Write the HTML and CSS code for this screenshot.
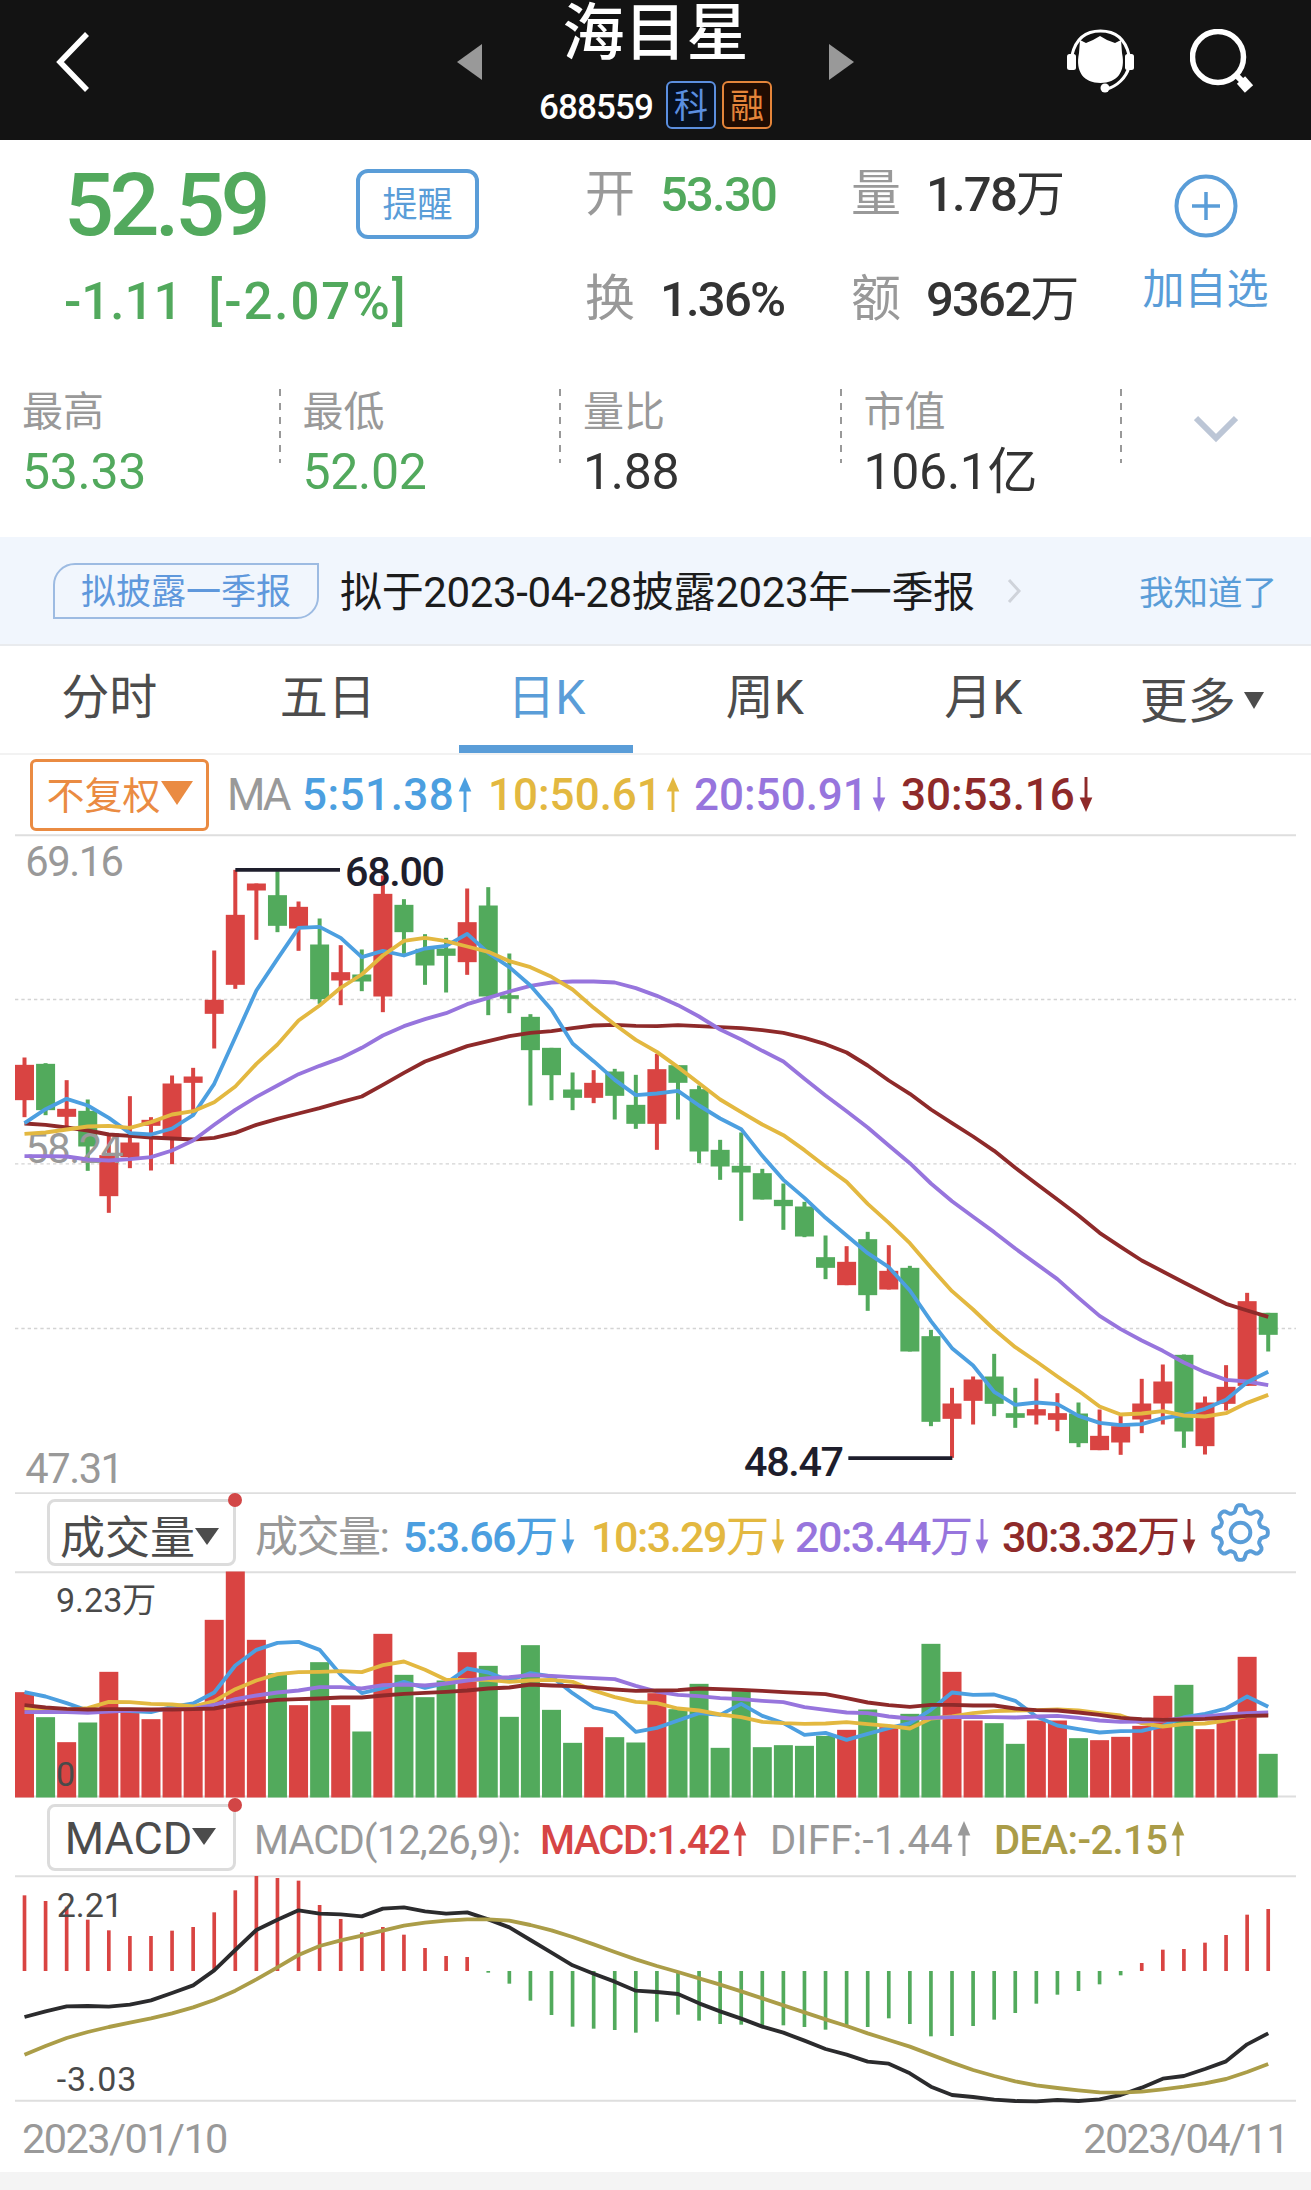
FILE: index.html
```html
<!DOCTYPE html>
<html lang="zh-CN">
<head>
  <meta charset="UTF-8">
  <title>海目星 688559</title>
  <meta name="viewport" content="width=device-width, initial-scale=1.0">
  <link rel="stylesheet" href="styles.css">
</head>
<body>
  <svg class="defs" width="0" height="0">
    <symbol id="up" viewBox="0 0 14 36"><path d="M7 10V36" stroke="currentColor" stroke-width="3"/><path d="M0.500 15L7 0l6.500 15z" fill="currentColor"/></symbol>
    <symbol id="down" viewBox="0 0 14 36"><path d="M7 0V26" stroke="currentColor" stroke-width="3"/><path d="M0.500 21L7 36l6.500-15z" fill="currentColor"/></symbol>
  </svg>

  <header class="header">
    <svg class="back" width="34" height="60" viewBox="0 0 34 60"><path d="M31 2L4 30l27 28" fill="none" stroke="#fff" stroke-width="5.500"/></svg>
    <div class="stock">
      <svg width="25" height="36" viewBox="0 0 25 36"><path d="M25 0v36L0 18z" fill="#999"/></svg>
      <div class="stock-title">
        <h1>海目星</h1>
        <div class="stock-code">
          <span class="code">688559</span>
          <span class="badge badge-blue">科</span>
          <span class="badge badge-orange">融</span>
        </div>
      </div>
      <svg width="25" height="36" viewBox="0 0 25 36"><path d="M0 0v36l25-18z" fill="#999"/></svg>
    </div>
    <div class="header-icons">
      <svg width="68" height="66" viewBox="0 0 68 66">
        <path d="M13 11L19 14 26 11 33 7 40 11 48 14 54 11 55 24C59 43 50 54 33.500 54S8 43 12 24z" fill="#fff"/>
        <path d="M5 26C9 9 20 2 33.500 2S58 9 62 26M62 38C59 49 50 57 40 60" fill="none" stroke="#fff" stroke-width="3"/>
        <rect x="0" y="25" width="9" height="16" rx="2.500" fill="#fff"/>
        <rect x="58" y="25" width="9" height="16" rx="2.500" fill="#fff"/>
        <circle cx="38" cy="59" r="4.500" fill="#fff"/>
      </svg>
      <svg width="66" height="66" viewBox="0 0 66 66">
        <circle cx="28" cy="28" r="25.500" fill="none" stroke="#fff" stroke-width="5.500"/>
        <path d="M45 45l7 7" stroke="#fff" stroke-width="6"/>
        <path d="M51 51l8 9" stroke="#fff" stroke-width="11"/>
      </svg>
    </div>
  </header>

  <section class="quote">
    <div class="quote-main">
      <div class="price">
        <div class="price-row">
          <span class="price-now">52.59</span>
          <button class="remind">提醒</button>
        </div>
        <div class="price-change"><span>-1.11</span><span class="pct">[-2.07%]</span></div>
      </div>
      <dl class="facts">
        <dt>开</dt><dd class="green">53.30</dd>
        <dt>量</dt><dd>1.78<i>万</i></dd>
        <dt>换</dt><dd>1.36%</dd>
        <dt>额</dt><dd>9362<i>万</i></dd>
      </dl>
      <div class="add">
        <svg width="64" height="64" viewBox="0 0 64 64" fill="none" stroke="#5a9dd8"><circle cx="32" cy="32" r="29.500" stroke-width="4"/><path d="M32 18v28M18 32h28" stroke-width="3.500"/></svg>
        <span>加自选</span>
      </div>
    </div>
    <div class="stats">
      <div class="stat"><span>最高</span><b class="green">53.33</b></div>
      <div class="stat"><span>最低</span><b class="green">52.02</b></div>
      <div class="stat"><span>量比</span><b>1.88</b></div>
      <div class="stat"><span>市值</span><b>106.1亿</b></div>
      <svg class="more-arrow" width="44" height="28" viewBox="0 0 44 28"><path d="M2 3l20 20L42 3" fill="none" stroke="#bcc6d6" stroke-width="6"/></svg>
    </div>
  </section>

  <section class="notice">
    <span class="notice-tag">拟披露一季报</span>
    <span class="notice-text">拟于2023-04-28披露2023年一季报</span>
    <svg class="notice-arrow" width="16" height="26" viewBox="0 0 16 26"><path d="M3 2l10 11L3 24" fill="none" stroke="#cfd3da" stroke-width="3"/></svg>
    <a class="notice-ok">我知道了</a>
  </section>

  <nav class="tabs">
    <span>分时</span>
    <span>五日</span>
    <span class="active">日K</span>
    <span>周K</span>
    <span>月K</span>
    <span class="tab-more">更多<i class="tri"></i></span>
  </nav>

  <section class="ma-bar">
    <button class="fq">不复权<i class="tri"></i></button>
    <span class="grey">MA</span>
    <span class="c5">5:51.38<svg><use href="#up"/></svg></span>
    <span class="c10">10:50.61<svg><use href="#up"/></svg></span>
    <span class="c20">20:50.91<svg><use href="#down"/></svg></span>
    <span class="c30">30:53.16<svg><use href="#down"/></svg></span>
  </section>

  <svg id="kline" class="chart kline" viewBox="0 -18 3933 1977"></svg>

  <section class="ind-bar vol-bar">
    <button class="ind">成交量<i class="tri"></i></button>
    <span class="grey">成交量:</span>
    <span class="c5">5:3.66<i>万</i><svg><use href="#down"/></svg></span>
    <span class="c10">10:3.29<i>万</i><svg><use href="#down"/></svg></span>
    <span class="c20">20:3.44<i>万</i><svg><use href="#down"/></svg></span>
    <span class="c30">30:3.32<i>万</i><svg><use href="#down"/></svg></span>
    <svg class="gear" viewBox="-31 -31 62 62" fill="none" stroke="#5a9dd8" stroke-width="4"><path id="gearPath" stroke-linejoin="round"/><circle r="10"/></svg>
  </section>

  <svg id="volume" class="chart volume" viewBox="0 275 3933 678"></svg>

  <section class="ind-bar macd-bar">
    <button class="ind ind-macd">MACD<i class="tri"></i></button>
    <span class="grey">MACD(12,26,9):</span>
    <span class="red">MACD:1.42<svg><use href="#up"/></svg></span>
    <span class="grey diff">DIFF:-1.44<svg><use href="#up"/></svg></span>
    <span class="olive">DEA:-2.15<svg><use href="#up"/></svg></span>
  </section>

  <svg id="macd" class="chart macd" viewBox="0 258 3933 675"></svg>

  <footer class="dates"><span>2023/01/10</span><span>2023/04/11</span></footer>

  <script src="chart.js"></script>
</body>
</html>
```
FILE: styles.css
```css
* {
  margin: 0;
  padding: 0;
  box-sizing: border-box;
}

body {
  width: 1311px;
  min-height: 2190px;
  background: #f4f4f4;
  color: #333;
  font-family: Roboto, "Noto Sans CJK SC", sans-serif;
}

button {
  background: none;
  font-family: inherit;
}

i {
  font-style: normal;
  font-weight: 400;
}

.defs {
  display: none;
}

.green { color: #52a95d; }
.red { color: #d64545; }
.grey { color: #999; }
.olive { color: #aa9c48; }
.c5 { color: #4c9fe0; }
.c10 { color: #e3b840; }
.c20 { color: #9775dd; }
.c30 { color: #8e2a2a; }

.tri {
  display: inline-block;
  border: solid transparent;
  border-width: 17px 12px 0;
  border-top-color: currentColor;
}

/* header */
.header {
  height: 140px;
  display: grid;
  grid-template-columns: 457px 397px 1fr;
  background: #131313;
}

.back {
  margin: 32px 0 0 56px;
}

.stock {
  display: flex;
  justify-content: space-between;
}

.stock > svg {
  margin-top: 44px;
}

.stock-title {
  display: flex;
  flex-direction: column;
  align-items: center;
}

h1 {
  height: 81px;
  line-height: 68px;
  font-size: 62px;
  font-weight: 500;
  color: #fff;
}

.stock-code {
  display: flex;
  align-items: center;
  gap: 6px;
}

.code {
  margin: 4px 7px 0 0;
  font-size: 35px;
  font-weight: 500;
  letter-spacing: -0.9px;
  color: #fff;
}

.badge {
  width: 50px;
  height: 48px;
  border: 2px solid;
  border-radius: 6px;
  font-size: 34px;
  line-height: 46px;
  text-align: center;
}

.badge-blue {
  color: #5b8fe0;
  background: #06101f;
}

.badge-orange {
  color: #e5853a;
  background: #1f0c02;
}

.header-icons {
  display: flex;
  gap: 55px;
  padding: 29px 0 0 213px;
}

/* quote */
.quote {
  height: 397px;
  background: #fff;
}

.quote-main {
  display: grid;
  grid-template-columns: 585px 515px 211px;
  height: 240px;
}

.price {
  padding: 27px 0 0 64px;
  color: #52a95d;
}

.price-row {
  display: flex;
  align-items: center;
  height: 74px;
}

.price-now {
  width: 292px;
  font-size: 88px;
  font-weight: 500;
  letter-spacing: -4.5px;
}

.remind {
  width: 123px;
  height: 70px;
  padding-bottom: 5px;
  border: 4px solid #5a9dd8;
  border-radius: 12px;
  color: #5a9dd8;
  font-size: 35px;
}

.price-change {
  display: flex;
  gap: 26px;
  margin-top: 31px;
  font-size: 51px;
  font-weight: 500;
  line-height: 60px;
}

.pct {
  letter-spacing: 1.9px;
}

.facts {
  display: grid;
  grid-template-columns: 75px 191px 75px 1fr;
  grid-template-rows: 105px 105px;
  padding-top: 2px;
  font-size: 49px;
  line-height: 105px;
  white-space: nowrap;
}

.facts dt {
  color: #999;
  font-size: 50px;
}

.facts dd {
  font-weight: 500;
  letter-spacing: -1.8px;
}

.add {
  display: flex;
  flex-direction: column;
  align-items: center;
  padding-top: 34px;
  color: #5a9dd8;
  font-size: 42px;
}

.add span {
  margin-top: 22px;
  line-height: 60px;
}

.stats {
  display: flex;
}

.stat {
  width: 280.5px;
  height: 115px;
  padding: 2px 0 0 22px;
  background: repeating-linear-gradient(#999 0 7px, transparent 7px 14px) right 9px / 2px 74px no-repeat;
}

.stat span {
  display: block;
  color: #999;
  font-size: 41px;
  line-height: 60px;
}

.stat b {
  display: block;
  font-size: 50px;
  font-weight: 400;
  line-height: 60px;
  letter-spacing: -0.3px;
}

.more-arrow {
  margin: 35px 0 0 72px;
}

/* notice */
.notice {
  display: flex;
  align-items: center;
  height: 109px;
  padding-left: 53px;
  background: #f1f6fd;
  border-bottom: 2px solid #e9ebee;
}

.notice-tag {
  width: 266px;
  height: 56px;
  border: 2px solid #9dbbe2;
  border-radius: 22px 0;
  color: #5f98dc;
  font-size: 35px;
  line-height: 55px;
  text-align: center;
}

.notice-text {
  margin: -4px 0 0 21px;
  font-size: 42px;
  letter-spacing: -0.35px;
  color: #1c1c1c;
}

.notice-arrow {
  margin-left: 31px;
}

.notice-ok {
  margin: -2px 0 0 auto;
  padding-right: 34px;
  color: #5a9dd8;
  font-size: 34.5px;
}

/* tabs */
.tabs {
  display: grid;
  grid-template-columns: repeat(6, 1fr);
  height: 109px;
  background: #fff;
  border-bottom: 2px solid #f2f2f2;
  color: #4c4c4c;
  font-size: 48px;
  line-height: 103px;
  text-align: center;
}

.tabs .active {
  width: 174px;
  height: 107px;
  margin: 0 auto;
  color: #5a9dd8;
  border-bottom: 8px solid #5a9dd8;
}

.tab-more {
  padding-top: 4px;
}

.tab-more .tri {
  margin: 0 0 9px 8px;
  border-width: 17px 10px 0;
}

/* indicator rows */
.ma-bar {
  display: grid;
  grid-template-columns: 197px 75px 186px 206px 207px 1fr;
  align-items: center;
  height: 79px;
  padding-left: 30px;
  background: #fff;
  font-size: 44px;
  font-weight: 500;
  white-space: nowrap;
}

.ma-bar .grey {
  font-weight: 400;
  letter-spacing: -3px;
}

.ma-bar .c5 {
  letter-spacing: 0.5px;
}

.ma-bar svg,
.ind-bar span svg {
  width: 14px;
  height: 35px;
  margin-left: 4px;
  vertical-align: -2px;
}

.fq {
  width: 179px;
  height: 72px;
  padding-bottom: 5px;
  border: 3px solid #ea8b42;
  border-radius: 6px;
  color: #ea8b42;
  font-size: 38px;
}

.fq .tri {
  margin-bottom: 4px;
  border-width: 24px 16px 0;
}

.ind-bar {
  display: grid;
  align-items: center;
  padding-left: 47px;
  background: #fff;
  font-weight: 500;
  white-space: nowrap;
}

.ind-bar .grey {
  font-weight: 400;
}

.vol-bar {
  grid-template-columns: 208px 148px 188px 204px 207px 208px 1fr;
  height: 77px;
  font-size: 43px;
  letter-spacing: -1.5px;
}

.macd-bar {
  grid-template-columns: 207px 286px 230px 224px 1fr;
  height: 78px;
  font-size: 40px;
  letter-spacing: -0.9px;
}

.macd-bar span {
  padding-top: 7px;
}

.macd-bar .red {
  letter-spacing: -1.6px;
}

.macd-bar .diff {
  letter-spacing: 0.3px;
}

.macd-bar .olive {
  letter-spacing: -0.6px;
}

.ind {
  position: relative;
  width: 189px;
  height: 67px;
  padding: 0 4px 5px 0;
  border: 3px solid #dcdcdc;
  border-radius: 8px;
  color: #4c4c4c;
  font-size: 45px;
}

.ind-macd {
  padding: 2px 2px 0 0;
}

.ind::after {
  content: "";
  position: absolute;
  top: -9px;
  right: -9px;
  width: 14px;
  height: 14px;
  border-radius: 50%;
  background: #d24646;
}

.ind .tri {
  margin-bottom: 9px;
}

.gear {
  width: 61px;
  height: 61px;
}

/* charts */
.chart {
  display: block;
  width: 1311px;
  background: #fff;
}

.kline { height: 660px; }
.volume { height: 227px; }
.macd { height: 225px; overflow: visible; }

.chart polyline {
  fill: none;
  stroke-width: 11.5;
  stroke-linejoin: round;
}

.chart .up { fill: #d94442; }
.chart .dn { fill: #52aa5c; }

.chart .frame {
  stroke: #dedede;
  stroke-width: 6;
}

.chart .dash {
  stroke: #d4d4d4;
  stroke-width: 4;
  stroke-dasharray: 10 9;
}

.chart .leader {
  stroke: #1e1e2c;
  stroke-width: 11;
}

.axis {
  fill: #999;
  font-size: 125px;
  letter-spacing: -4.5px;
}

.mark {
  fill: #1e1e2c;
  font-size: 124px;
  font-weight: 500;
  letter-spacing: -4px;
}

.small {
  fill: #4a4a4a;
  font-size: 102px;
  letter-spacing: 0;
}

.wide {
  letter-spacing: 3px;
}

.dates {
  display: flex;
  justify-content: space-between;
  height: 71px;
  padding: 0 23px 0 22px;
  background: #fff;
  color: #999;
  font-size: 41.5px;
  line-height: 76px;
  letter-spacing: -1.6px;
}
```
FILE: chart.js
```js
// chart units are 1/3 px, one column every 63.24 units
const STEP = 63.24;
const X0 = 73.5;
const BODY = 57;

// [direction, high, body top, body bottom, low]
const candles = [
  ['u', 651, 673, 779, 830], ['d', 668, 670, 809, 824], ['u', 719, 805, 829, 858], ['d', 777, 811, 918, 991],
  ['u', 885, 944, 1067, 1117], ['u', 767, 906, 950, 983], ['u', 830, 838, 856, 990], ['u', 705, 729, 893, 971],
  ['u', 682, 708, 727, 820], ['u', 330, 478, 520, 624], ['u', 88, 223, 433, 445], ['u', 129, 129, 150, 298],
  ['d', 92, 164, 256, 275], ['u', 183, 199, 264, 331], ['d', 234, 312, 476, 490], ['u', 314, 395, 420, 494],
  ['d', 327, 402, 423, 452], ['u', 105, 160, 468, 515], ['d', 176, 193, 275, 340], ['d', 281, 325, 375, 433],
  ['d', 292, 324, 346, 456], ['u', 144, 245, 365, 403], ['d', 140, 195, 468, 524], ['d', 339, 464, 475, 518],
  ['d', 521, 529, 629, 795], ['d', 622, 622, 704, 779], ['d', 696, 747, 772, 809], ['u', 689, 727, 772, 788],
  ['d', 685, 693, 766, 837], ['d', 703, 793, 850, 865], ['u', 640, 686, 850, 928], ['d', 674, 674, 727, 837],
  ['d', 735, 746, 933, 968], ['d', 898, 928, 978, 1018], ['d', 876, 976, 996, 1141], ['d', 985, 998, 1077, 1077],
  ['d', 1029, 1078, 1097, 1168], ['d', 1084, 1098, 1188, 1190], ['d', 1185, 1250, 1282, 1316], ['u', 1217, 1264, 1334, 1334],
  ['d', 1174, 1196, 1364, 1411], ['u', 1214, 1291, 1347, 1347], ['d', 1276, 1282, 1533, 1533], ['d', 1468, 1487, 1744, 1757],
  ['u', 1642, 1689, 1735, 1852], ['u', 1608, 1617, 1681, 1752], ['d', 1540, 1608, 1690, 1727], ['d', 1642, 1718, 1732, 1762],
  ['u', 1614, 1706, 1725, 1752], ['u', 1658, 1718, 1738, 1772], ['d', 1686, 1719, 1808, 1820], ['u', 1707, 1786, 1829, 1829],
  ['u', 1725, 1757, 1806, 1843], ['u', 1615, 1689, 1737, 1778], ['u', 1572, 1623, 1689, 1752], ['d', 1542, 1543, 1773, 1822],
  ['u', 1668, 1686, 1817, 1842], ['u', 1574, 1639, 1690, 1710], ['u', 1357, 1382, 1636, 1636], ['d', 1417, 1417, 1483, 1533]
];

const ma = {
  '#8e2a2a': [849, 853, 861, 870, 882, 886, 891, 894, 897, 892, 877, 853, 835, 819, 803, 785, 768, 733, 697, 663, 640, 617, 602, 587, 577, 572, 563, 555, 553, 556, 557, 554, 557, 560, 563, 569, 577, 592, 611, 636, 675, 720, 760, 807, 848, 888, 931, 982, 1030, 1077, 1125, 1177, 1219, 1260, 1293, 1326, 1358, 1390, 1410, 1429],
  '#9775dd': [947, 947, 948, 957, 960, 956, 950, 930, 900, 853, 808, 769, 735, 701, 676, 653, 622, 585, 557, 536, 518, 491, 472, 453, 436, 426, 423, 423, 426, 443, 466, 494, 528, 567, 597, 631, 663, 715, 765, 812, 861, 915, 968, 1029, 1082, 1129, 1175, 1224, 1270, 1316, 1372, 1426, 1466, 1500, 1531, 1566, 1595, 1618, 1623, 1634],
  '#4c9fe0': [848, 806, 775, 795, 832, 878, 882, 864, 824, 730, 590, 450, 355, 262, 259, 292, 350, 331, 345, 324, 316, 280, 337, 380, 435, 508, 609, 662, 718, 764, 759, 751, 795, 834, 866, 946, 1018, 1072, 1132, 1185, 1238, 1280, 1350, 1442, 1523, 1575, 1654, 1693, 1686, 1691, 1726, 1747, 1754, 1751, 1733, 1724, 1705, 1678, 1625, 1594],
  '#e3b840': [880, 876, 867, 858, 856, 862, 845, 822, 812, 785, 738, 670, 612, 540, 495, 442, 402, 345, 301, 292, 302, 318, 334, 362, 380, 409, 447, 502, 552, 598, 634, 680, 728, 777, 815, 852, 884, 929, 978, 1024, 1090, 1147, 1208, 1282, 1352, 1407, 1467, 1520, 1563, 1608, 1651, 1698, 1722, 1719, 1712, 1725, 1728, 1718, 1687, 1663]
};

const vol = [637, 712, 787, 728, 576, 690, 718, 692, 690, 420, 275, 480, 580, 676, 547, 676, 755, 462, 585, 652, 602, 517, 558, 711, 496, 690, 789, 742, 772, 788, 640, 688, 612, 804, 634, 802, 796, 798, 768, 750, 689, 742, 702, 492, 576, 722, 730, 792, 722, 722, 775, 781, 771, 738, 648, 615, 748, 722, 531, 822];

const volMa = {
  '#4c9fe0': [637, 650, 670, 692, 690, 694, 697, 681, 671, 638, 557, 510, 489, 486, 510, 585, 640, 625, 606, 624, 610, 566, 578, 602, 580, 590, 640, 683, 698, 756, 744, 722, 700, 705, 672, 708, 730, 765, 759, 780, 762, 745, 730, 690, 638, 645, 644, 663, 710, 737, 748, 758, 754, 753, 738, 712, 702, 686, 650, 681],
  '#e3b840': [685, 690, 690, 685, 666, 667, 672, 674, 680, 664, 628, 602, 583, 577, 576, 574, 577, 556, 545, 570, 600, 600, 600, 606, 602, 600, 606, 632, 652, 666, 670, 686, 692, 704, 712, 726, 730, 732, 731, 727, 733, 738, 746, 716, 710, 700, 694, 692, 691, 689, 692, 700, 707, 730, 740, 733, 731, 722, 708, 705],
  '#9775dd': [697, 696, 697, 699, 695, 692, 690, 688, 687, 675, 658, 647, 638, 632, 622, 622, 626, 616, 614, 617, 611, 602, 595, 592, 586, 588, 592, 595, 598, 618, 635, 645, 649, 655, 658, 663, 667, 682, 690, 698, 700, 710, 716, 714, 712, 711, 712, 713, 710, 708, 714, 722, 726, 725, 722, 715, 710, 704, 700, 698],
  '#8e2a2a': [676, 683, 687, 689, 688, 688, 689, 689, 688, 686, 675, 667, 660, 658, 656, 653, 653, 647, 642, 639, 636, 632, 626, 623, 614, 617, 619, 624, 629, 633, 632, 631, 626, 628, 630, 633, 637, 640, 643, 655, 668, 676, 681, 675, 675, 677, 677, 686, 691, 692, 698, 705, 714, 718, 720, 719, 717, 713, 708, 707]
};

const ZERO = 543;
const macdBars = [316, 333, 350, 389, 421, 438, 438, 422, 411, 367, 301, 258, 264, 272, 345, 387, 427, 411, 434, 474, 498, 501, 548, 581, 632, 675, 710, 716, 720, 728, 695, 674, 692, 702, 704, 705, 706, 711, 719, 705, 711, 685, 702, 739, 738, 708, 689, 669, 641, 614, 603, 583, 556, 519, 479, 477, 458, 435, 374, 357];

const macdLines = {
  '#2b2b2d': [681, 664, 649, 648, 650, 644, 631, 609, 586, 541, 480, 420, 389, 361, 371, 373, 379, 356, 352, 364, 371, 367, 388, 412, 450, 488, 526, 551, 575, 602, 606, 612, 640, 664, 686, 710, 728, 752, 777, 794, 815, 821, 850, 890, 915, 921, 929, 933, 934, 930, 933, 928, 915, 893, 866, 858, 837, 814, 763, 730],
  '#ab9d48': [794, 768, 744, 726, 711, 698, 685, 670, 652, 630, 602, 568, 532, 495, 468, 451, 437, 422, 407, 398, 392, 388, 388, 392, 405, 421, 441, 463, 486, 508, 528, 546, 565, 584, 604, 625, 646, 667, 688, 708, 730, 750, 770, 794, 818, 840, 858, 874, 886, 894, 901, 907, 908, 905, 898, 890, 880, 867, 846, 822]
};

const cx = i => X0 + i * STEP;

const rect = (i, w, top, bottom, cls) =>
  `<rect x="${cx(i) - w / 2}" y="${top}" width="${w}" height="${bottom - top}" class="${cls}"/>`;

const hline = (y, cls, x1 = 45, x2 = 3888) =>
  `<line x1="${x1}" x2="${x2}" y1="${y}" y2="${y}" class="${cls}"/>`;

const text = (x, y, cls, s) => `<text x="${x}" y="${y}" class="${cls}">${s}</text>`;

const lines = set => Object.entries(set).map(([color, ys]) =>
  `<polyline stroke="${color}" points="${ys.map((y, i) => cx(i) + ',' + y).join(' ')}"/>`).join('');

const cls = i => candles[i][0] === 'u' ? 'up' : 'dn';

document.getElementById('kline').innerHTML =
  hline(-16, 'frame') + hline(477, 'dash') + hline(970, 'dash') + hline(1464, 'dash') + hline(1958, 'frame') +
  candles.map(([, high, top, bottom, low], i) => rect(i, 12, high, low, cls(i)) + rect(i, BODY, top, bottom, cls(i))).join('') +
  text(76, 105, 'axis', '69.16') + text(76, 968, 'axis', '58.24') + text(76, 1928, 'axis', '47.31') +
  lines(ma) +
  hline(88, 'leader', 706, 1020) + text(1035, 137, 'mark', '68.00') +
  hline(1853, 'leader', 2545, 2857) + text(2232, 1905, 'mark', '48.47');

document.getElementById('volume').innerHTML =
  hline(277, 'frame') + hline(950, 'frame') +
  vol.map((v, i) => rect(i, BODY, v, 953, cls(i))).join('') +
  text(168, 398, 'small', '9.23万') + text(168, 920, 'small', '0') +
  lines(volMa);

document.getElementById('macd').innerHTML =
  hline(259, 'frame') + hline(932, 'frame') +
  macdBars.map((v, i) => rect(i, 11, Math.min(v, ZERO), Math.max(v, ZERO), v < ZERO ? 'up' : 'dn')).join('') +
  text(170, 380, 'small', '2.21') + text(170, 903, 'small wide', '-3.03') +
  lines(macdLines);

// gear outline: 8 rounded teeth
let gear = '';
for (let a = 0; a < 360; a += 3) {
  const r = 24.5 + 3.5 * Math.tanh(1.8 * Math.cos(a * 8 * Math.PI / 180));
  const t = a * Math.PI / 180;
  gear += (a ? 'L' : 'M') + (r * Math.sin(t)).toFixed(1) + ' ' + (-r * Math.cos(t)).toFixed(1);
}
document.getElementById('gearPath').setAttribute('d', gear + 'Z');
```
